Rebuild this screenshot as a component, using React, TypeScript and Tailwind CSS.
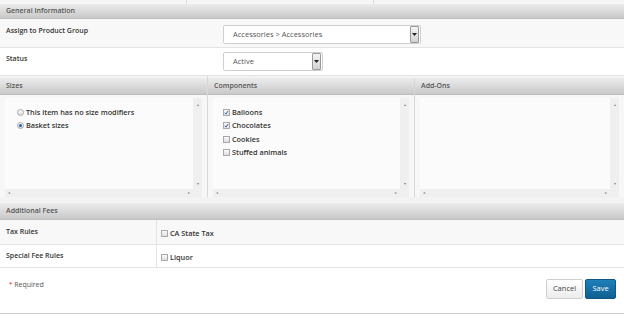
import React from "react";

function SectionHeader({ title, tall }: { title: string; tall?: boolean }) {
  return (
    <div
      className={`${tall ? "h-[17px]" : "h-[15px]"} flex items-center px-[6px] bg-gradient-to-b from-[#ececec] to-[#c9c9c9] border-b border-[#bdbdbd] text-[7px] font-semibold text-[#555]`}
    >
      {title}
    </div>
  );
}

function Select({ value, width }: { value: string; width: string }) {
  return (
    <div className={`${width} h-[19px] flex items-center bg-white border border-[#cfcfcf] rounded-[2px]`}>
      <span className="flex-1 pl-[9px] text-[7.5px] text-[#555]">{value}</span>
      <div className="w-[9px] h-[17px] mr-[1px] flex items-center justify-center bg-gradient-to-b from-[#f4f4f4] to-[#d2d2d2] border border-[#999] rounded-[1px]">
        <svg width="5" height="3" viewBox="0 0 5 3">
          <path d="M0 0h5L2.5 3z" fill="#222" />
        </svg>
      </div>
    </div>
  );
}

function Checkbox({ checked }: { checked?: boolean }) {
  return (
    <span className="w-[7px] h-[7px] border border-[#a9a9a9] bg-gradient-to-b from-[#fafafa] to-[#dedede] flex items-center justify-center shrink-0">
      {checked && (
        <svg width="5" height="5" viewBox="0 0 5 5">
          <path d="M0.8 2.8L2 4L4.2 0.8" stroke="#2a4f9e" strokeWidth="0.9" fill="none" />
        </svg>
      )}
    </span>
  );
}

function Radio({ checked }: { checked?: boolean }) {
  return (
    <span className="w-[7px] h-[7px] rounded-full border border-[#a9a9a9] bg-gradient-to-b from-[#fafafa] to-[#dcdcdc] flex items-center justify-center shrink-0">
      {checked && <span className="w-[3px] h-[3px] rounded-full bg-[#1d5fb5]" />}
    </span>
  );
}

function ScrollPanel({ children }: { children?: React.ReactNode }) {
  return (
    <div className="h-[102px] bg-[#f7f7f7] px-[5px] pt-[3px]">
      <div className="flex h-[99px] bg-[#fbfbfb]">
        <div className="flex-1 flex flex-col">
          <div className="flex-1 pl-[12px] pt-[11px] flex flex-col gap-[6px]">{children}</div>
          <div className="h-[8px] bg-[#efefef] flex items-center justify-between px-[3px] text-[4px] text-[#888]">
            <span>◂</span>
            <span>▸</span>
          </div>
        </div>
        <div className="w-[9px] bg-[#efefef] flex flex-col justify-between items-center pt-[4px] pb-[10px] text-[4px] text-[#888]">
          <span>▴</span>
          <span>▾</span>
        </div>
      </div>
    </div>
  );
}

function Option({ children }: { children: React.ReactNode }) {
  return (
    <div className="flex items-center gap-[2px] text-[7.3px] font-semibold text-[#333] leading-none">
      {children}
    </div>
  );
}

export default function App() {
  return (
    <div
      className="w-[624px] h-[316px] bg-white overflow-hidden"
      style={{ fontFamily: '"Open Sans", "Noto Sans", sans-serif' }}
    >
      <div className="h-[4px] flex bg-[#f6f6f6]">
        <div className="w-[187px] border-r border-[#ddd]" />
        <div className="w-[187px] border-r border-[#ddd]" />
      </div>

      <SectionHeader title="General Information" />

      <div className="h-[29px] flex bg-[#f8f8f8] border-b border-[#e4e4e4]">
        <div className="w-[217px] pl-[6px] pt-[7px] text-[7px] font-semibold text-[#333]">
          Assign to Product Group
        </div>
        <div className="pl-[6px] pt-[6px]">
          <Select value="Accessories > Accessories" width="w-[198px]" />
        </div>
      </div>

      <div className="h-[27px] flex bg-white">
        <div className="w-[217px] pl-[6px] pt-[6px] text-[7px] font-semibold text-[#333]">Status</div>
        <div className="pl-[6px] pt-[4px]">
          <Select value="Active" width="w-[100px]" />
        </div>
      </div>

      <div className="h-[3px] flex bg-[#f3f3f3] border-t border-[#e4e4e4]">
        <div className="w-[208px] border-r border-[#ddd]" />
      </div>

      <div className="flex">
        <div className="w-[208px] border-r border-[#d8d8d8]">
          <SectionHeader title="Sizes" tall />
          <ScrollPanel>
            <Option>
              <Radio />
              <span>This item has no size modifiers</span>
            </Option>
            <Option>
              <Radio checked />
              <span>Basket sizes</span>
            </Option>
          </ScrollPanel>
        </div>
        <div className="w-[207px] border-r border-[#d8d8d8]">
          <SectionHeader title="Components" tall />
          <ScrollPanel>
            <div className="-ml-[2px] flex flex-col gap-[6px]">
              <Option>
                <Checkbox checked />
                <span>Balloons</span>
              </Option>
              <Option>
                <Checkbox checked />
                <span>Chocolates</span>
              </Option>
              <Option>
                <Checkbox />
                <span>Cookies</span>
              </Option>
              <Option>
                <Checkbox />
                <span>Stuffed animals</span>
              </Option>
            </div>
          </ScrollPanel>
        </div>
        <div className="flex-1">
          <SectionHeader title="Add-Ons" tall />
          <ScrollPanel />
        </div>
      </div>

      <div className="h-[6px] bg-[#f3f3f3]" />

      <SectionHeader title="Additional Fees" tall />

      <div className="h-[25px] flex bg-[#f8f8f8] border-b border-[#e4e4e4]">
        <div className="w-[157px] border-r border-[#e4e4e4] pl-[6px] pt-[7px] text-[7px] font-semibold text-[#333]">
          Tax Rules
        </div>
        <div className="pl-[4px] pt-[10px]">
          <Option>
            <Checkbox />
            <span>CA State Tax</span>
          </Option>
        </div>
      </div>

      <div className="h-[23px] flex bg-white border-b border-[#e4e4e4]">
        <div className="w-[157px] border-r border-[#e4e4e4] pl-[6px] pt-[6px] text-[7px] font-semibold text-[#333]">
          Special Fee Rules
        </div>
        <div className="pl-[4px] pt-[9px]">
          <Option>
            <Checkbox />
            <span>Liquor</span>
          </Option>
        </div>
      </div>

      <div className="h-[46px] flex items-start justify-between pl-[9px] pr-[8px] border-b border-[#cfcfcf]">
        <div className="pt-[12px] text-[7px] text-[#555]">
          <span className="text-[#e00] align-top text-[6px]">*</span> Required
        </div>
        <div className="pt-[11px] flex gap-[2px]">
          <button className="h-[20px] w-[37px] rounded-[2px] border border-[#cfcfcf] bg-gradient-to-b from-white to-[#ececec] text-[7.5px] text-[#444]">
            Cancel
          </button>
          <button className="h-[20px] w-[31px] rounded-[2px] border border-[#0d5686] bg-gradient-to-b from-[#1f80b8] to-[#0e5f92] text-[7.5px] text-white">
            Save
          </button>
        </div>
      </div>
    </div>
  );
}
